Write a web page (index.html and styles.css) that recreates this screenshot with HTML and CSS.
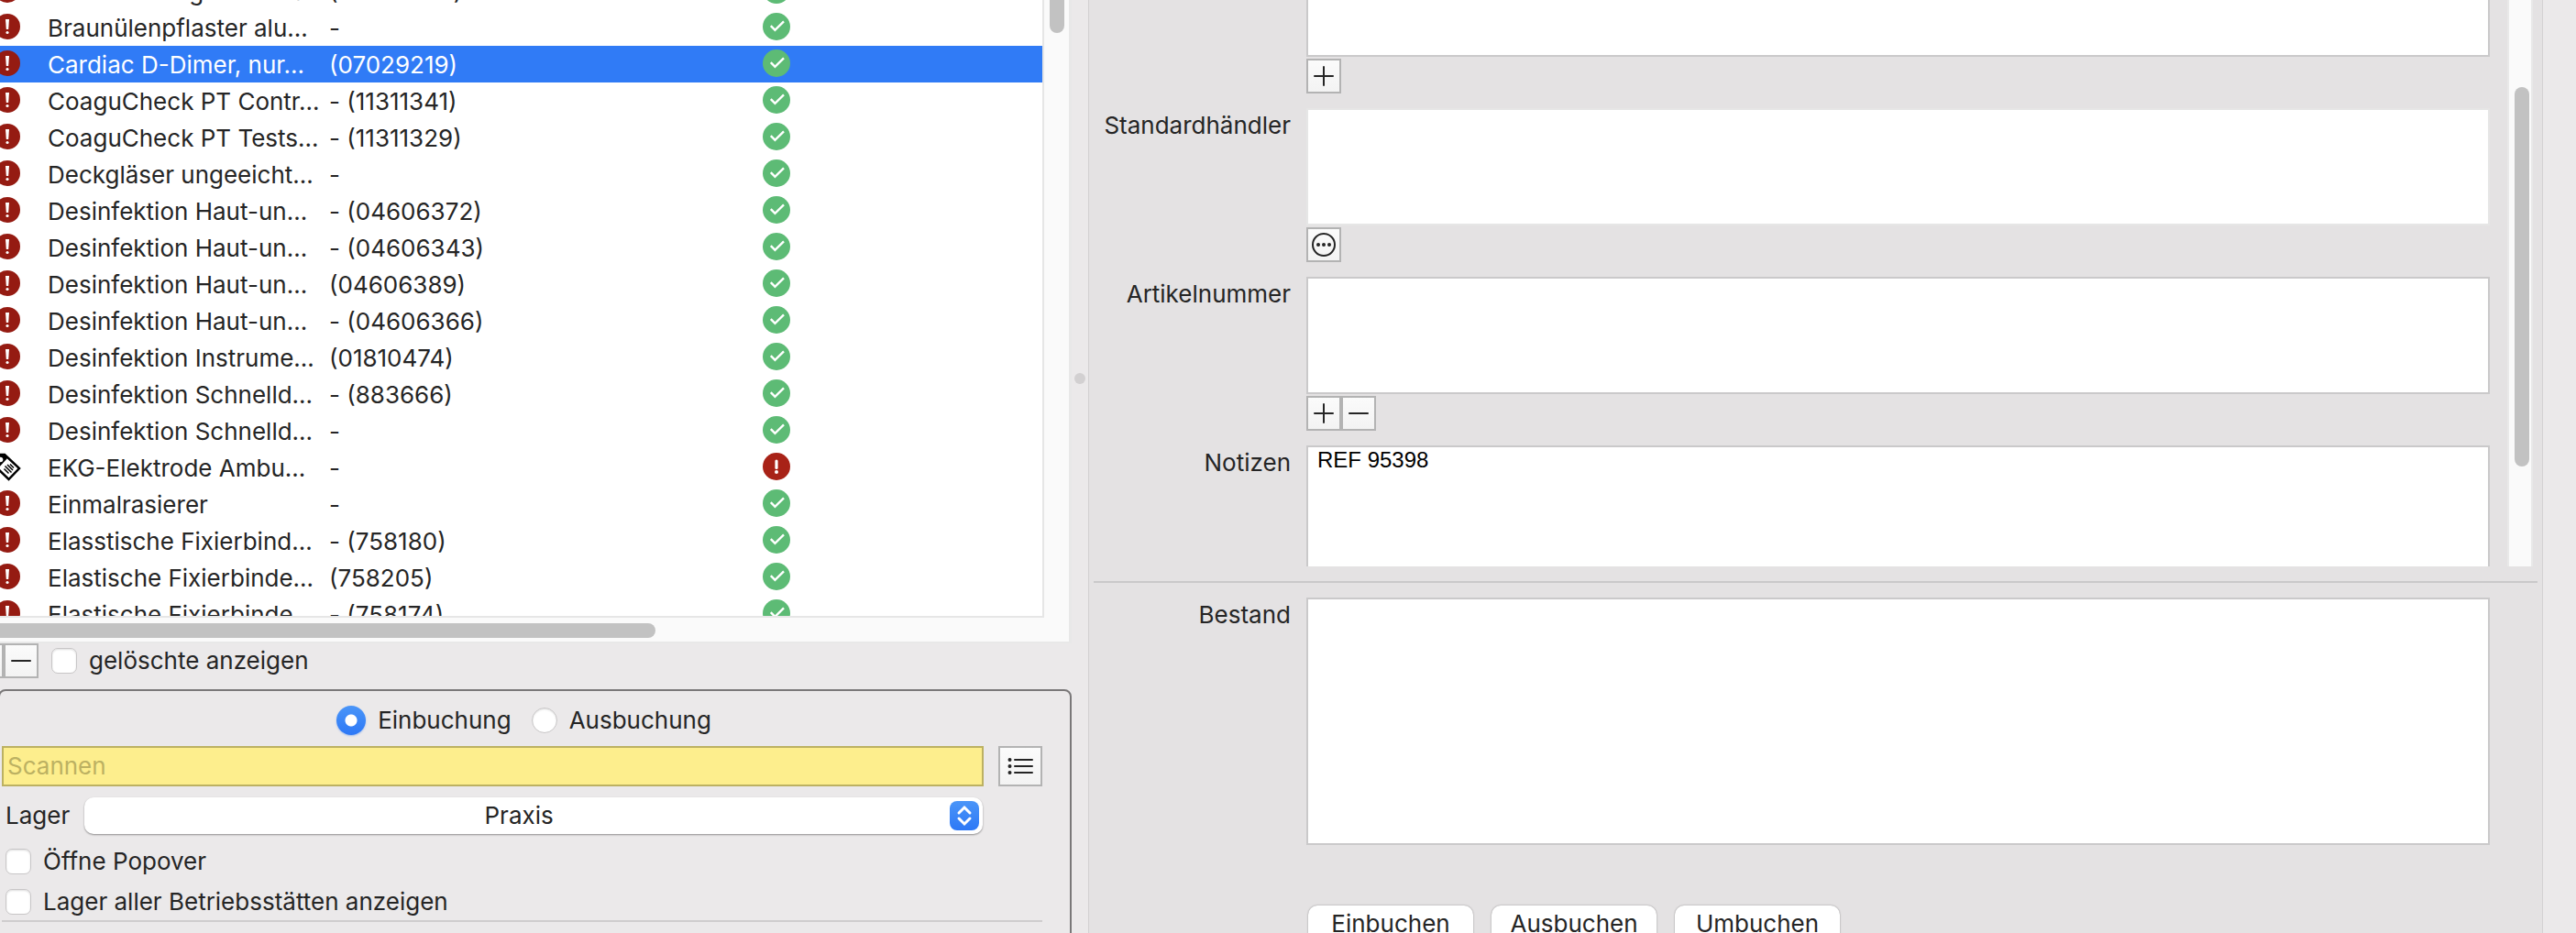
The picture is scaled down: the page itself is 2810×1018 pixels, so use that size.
FILE: index.html
```html
<!DOCTYPE html>
<html lang="de">
<head>
<meta charset="utf-8">
<title>Lagerverwaltung</title>
<link rel="stylesheet" href="styles.css">
</head>
<body>
<svg class="defs" aria-hidden="true">
  <symbol id="ok" viewBox="0 0 30 30"><circle cx="15" cy="15" r="15" fill="#5dbb75"/><path d="M8.800 14.200L13.400 18.900L23 9.400" fill="none" stroke="#fff" stroke-width="2.400"/></symbol>
  <symbol id="alert" viewBox="0 0 30 30"><circle cx="15" cy="15" r="15" fill="#a82217"/><path d="M15 9V16.500" stroke="#fff" stroke-width="3.200" stroke-linecap="round"/><circle cx="15" cy="21" r="2" fill="#fff"/></symbol>
  <symbol id="warn" viewBox="0 0 32 32"><circle class="ring" cx="16" cy="16" r="15"/><circle cx="16" cy="16" r="14" fill="#951b12"/><path d="M14 8h4l-.8 11h-2.400z" fill="#fff"/><circle cx="16" cy="22.500" r="1.600" fill="#fff"/></symbol>
  <symbol id="tag" viewBox="0 0 32 32"><path d="M1 3H13L29 18L17.500 30L1 14Z" fill="#fff" stroke="#000" stroke-width="2.500"/><path d="M1 2H13L17 6L6 18L1 13Z"/><circle cx="8.500" cy="8.500" r="2.800" fill="#fff"/><path d="M12.500 18.500l5 5M13.500 15.500l7 7M16 14l6 6M19 13.500l4 4" stroke="#000" stroke-width="1.500"/></symbol>
</svg>
<div class="window">
  <main class="left">
    <div class="list">
      <div class="rows">
        <table class="items">
          <colgroup><col class="c-state"><col class="c-name"><col class="c-code"><col class="c-stock"></colgroup>
          <tbody>
            <tr><td><svg class="state"><use href="#warn"/></svg></td><td>Blutentn. Magendorn S...</td><td>(06575595)</td><td><svg class="stock"><use href="#ok"/></svg></td></tr>
            <tr><td><svg class="state"><use href="#warn"/></svg></td><td>Braunülenpflaster alu...</td><td>-</td><td><svg class="stock"><use href="#ok"/></svg></td></tr>
            <tr class="selected"><td><svg class="state"><use href="#warn"/></svg></td><td>Cardiac D-Dimer, nur...</td><td>(07029219)</td><td><svg class="stock"><use href="#ok"/></svg></td></tr>
            <tr><td><svg class="state"><use href="#warn"/></svg></td><td>CoaguCheck PT Contr...</td><td>- (11311341)</td><td><svg class="stock"><use href="#ok"/></svg></td></tr>
            <tr><td><svg class="state"><use href="#warn"/></svg></td><td>CoaguCheck PT Tests...</td><td>- (11311329)</td><td><svg class="stock"><use href="#ok"/></svg></td></tr>
            <tr><td><svg class="state"><use href="#warn"/></svg></td><td>Deckgläser ungeeicht...</td><td>-</td><td><svg class="stock"><use href="#ok"/></svg></td></tr>
            <tr><td><svg class="state"><use href="#warn"/></svg></td><td>Desinfektion Haut-un...</td><td>- (04606372)</td><td><svg class="stock"><use href="#ok"/></svg></td></tr>
            <tr><td><svg class="state"><use href="#warn"/></svg></td><td>Desinfektion Haut-un...</td><td>- (04606343)</td><td><svg class="stock"><use href="#ok"/></svg></td></tr>
            <tr><td><svg class="state"><use href="#warn"/></svg></td><td>Desinfektion Haut-un...</td><td>(04606389)</td><td><svg class="stock"><use href="#ok"/></svg></td></tr>
            <tr><td><svg class="state"><use href="#warn"/></svg></td><td>Desinfektion Haut-un...</td><td>- (04606366)</td><td><svg class="stock"><use href="#ok"/></svg></td></tr>
            <tr><td><svg class="state"><use href="#warn"/></svg></td><td>Desinfektion Instrume...</td><td>(01810474)</td><td><svg class="stock"><use href="#ok"/></svg></td></tr>
            <tr><td><svg class="state"><use href="#warn"/></svg></td><td>Desinfektion Schnelld...</td><td>- (883666)</td><td><svg class="stock"><use href="#ok"/></svg></td></tr>
            <tr><td><svg class="state"><use href="#warn"/></svg></td><td>Desinfektion Schnelld...</td><td>-</td><td><svg class="stock"><use href="#ok"/></svg></td></tr>
            <tr><td><svg class="state"><use href="#tag"/></svg></td><td>EKG-Elektrode Ambu...</td><td>-</td><td><svg class="stock"><use href="#alert"/></svg></td></tr>
            <tr><td><svg class="state"><use href="#warn"/></svg></td><td>Einmalrasierer</td><td>-</td><td><svg class="stock"><use href="#ok"/></svg></td></tr>
            <tr><td><svg class="state"><use href="#warn"/></svg></td><td>Elasstische Fixierbind...</td><td>- (758180)</td><td><svg class="stock"><use href="#ok"/></svg></td></tr>
            <tr><td><svg class="state"><use href="#warn"/></svg></td><td>Elastische Fixierbinde...</td><td>(758205)</td><td><svg class="stock"><use href="#ok"/></svg></td></tr>
            <tr><td><svg class="state"><use href="#warn"/></svg></td><td>Elastische Fixierbinde...</td><td>- (758174)</td><td><svg class="stock"><use href="#ok"/></svg></td></tr>
          </tbody>
        </table>
      </div>
      <div class="vtrack"><div class="thumb"></div></div>
      <div class="htrack"><div class="thumb"></div></div>
    </div>
    <div class="list-tools">
      <div class="joined">
        <button class="square" aria-label="Hinzufügen"><svg viewBox="0 0 34 34"><path d="M7 17H27M17 7V27"/></svg></button><button class="square" aria-label="Entfernen"><svg viewBox="0 0 34 34"><path d="M7 17H27"/></svg></button>
      </div>
      <label class="check"><input type="checkbox">gelöschte anzeigen</label>
    </div>
    <section class="booking">
      <div class="modes">
        <label class="check"><input type="radio" name="mode" checked>Einbuchung</label>
        <label class="check"><input type="radio" name="mode">Ausbuchung</label>
      </div>
      <div class="scan">
        <input class="scan-input" type="text" placeholder="Scannen" aria-label="Scannen">
        <button class="square wide" aria-label="Liste"><svg viewBox="0 0 34 34"><path d="M11 10H30M11 17H30M11 24H30"/><path class="dots" d="M5.500 10h.01M5.500 17h.01M5.500 24h.01"/></svg></button>
      </div>
      <div class="store">
        <label for="lager">Lager</label>
        <div class="popup">
          <select id="lager"><option>Praxis</option></select>
          <span class="stepper"><svg viewBox="0 0 32 32"><path d="M10 13L16 7L22 13M10 19L16 25L22 19"/></svg></span>
        </div>
      </div>
      <label class="check"><input type="checkbox">Öffne Popover</label>
      <label class="check"><input type="checkbox">Lager aller Betriebsstätten anzeigen</label>
      <hr>
    </section>
  </main>
  <div class="splitter"><span></span></div>
  <section class="right">
    <div class="scroll-area">
      <div class="form">
        <div class="field first"><span></span><div>
          <div class="box"></div>
          <div class="joined"><button class="square" aria-label="Hinzufügen"><svg viewBox="0 0 34 34"><path d="M7 17H27M17 7V27"/></svg></button></div>
        </div></div>
        <div class="field"><label for="haendler">Standardhändler</label><div>
          <textarea id="haendler" class="box plain"></textarea>
          <div class="joined"><button class="square" aria-label="Mehr"><svg viewBox="0 0 34 34"><circle cx="17" cy="17" r="12"/><path class="dots" d="M11 17h.01M17 17h.01M23 17h.01"/></svg></button></div>
        </div></div>
        <div class="field"><label for="artikel">Artikelnummer</label><div>
          <textarea id="artikel" class="box"></textarea>
          <div class="joined"><button class="square" aria-label="Hinzufügen"><svg viewBox="0 0 34 34"><path d="M7 17H27M17 7V27"/></svg></button><button class="square" aria-label="Entfernen"><svg viewBox="0 0 34 34"><path d="M7 17H27"/></svg></button></div>
        </div></div>
        <div class="field"><label for="notizen">Notizen</label><div>
          <textarea id="notizen" class="box notes">REF 95398</textarea>
        </div></div>
      </div>
      <div class="vtrack"><div class="thumb"></div></div>
    </div>
    <hr>
    <div class="field stock-field"><label for="bestand">Bestand</label><div>
      <textarea id="bestand" class="box tall"></textarea>
      <div class="actions"><button>Einbuchen</button><button>Ausbuchen</button><button>Umbuchen</button></div>
    </div></div>
  </section>
  <aside class="edge"></aside>
</div>
</body>
</html>
```
FILE: styles.css
```css
* { box-sizing: border-box; }
body {
  margin: 0;
  overflow: hidden;
  background: #ebe9ea;
  color: #252525;
  font: 26px/32px Inter, "Liberation Sans", sans-serif;
}
button, input, select, textarea { font: inherit; color: inherit; margin: 0; }
.defs { position: absolute; width: 0; height: 0; }
.window {
  display: grid;
  grid-template-columns: minmax(0, 1169fr) 19px minmax(0, 1586fr) 36px;
  height: 100vh;
  overflow: hidden;
}

/* Article list */
.left { overflow: hidden; }
.list {
  display: grid;
  grid-template-columns: 1fr 30px;
  grid-template-rows: 674px 28px;
}
.rows {
  display: flex;
  align-items: flex-end;
  overflow: hidden;
  background: #fff;
  border: solid #e6e6e6;
  border-width: 0 2px 2px 0;
}
.items {
  width: 100%;
  margin-bottom: -18px;
  table-layout: fixed;
  border-collapse: collapse;
}
.items td { height: 40px; padding: 2px 0 0; white-space: nowrap; vertical-align: middle; }
.c-state { width: 52px; }
.c-name { width: 307px; }
.c-code { width: 473px; }
.items svg { display: block; }
.state { width: 32px; height: 32px; margin-left: -8px; margin-top: -4px; }
.stock { width: 30px; height: 30px; margin-top: -4px; }
.ring { fill: none; }
.selected { background: #307bf6; color: #fff; }
.selected .ring { fill: #fff; }
.selected .state { fill: #fff; }
.vtrack { background: #fafafa; border-right: 3px solid #e8e8e8; }
.list .vtrack { padding-left: 6px; }
.vtrack .thumb { width: 16px; height: 36px; background: #c2c2c2; border-radius: 0 0 8px 8px; }
.htrack {
  grid-column: 1 / -1;
  padding-top: 6px;
  background: #fafafa;
  border: solid #e8e8e8;
  border-width: 0 3px 2px 0;
}
.htrack .thumb { width: 715px; height: 16px; background: #c2c2c2; border-radius: 0 8px 8px 0; }

/* Square icon buttons */
.joined { display: flex; }
.square {
  width: 38px;
  height: 38px;
  padding: 0;
  border: 2px solid #b3b3b3;
  background: linear-gradient(#fbfbfb, #f3f3f3);
}
.square svg {
  display: block;
  width: 34px;
  height: 34px;
  margin: auto;
  fill: none;
  stroke: #252525;
  stroke-width: 2;
  stroke-linecap: round;
}
.square .dots { stroke-width: 4; }
.square.wide { width: 48px; height: 44px; }
.list-tools { display: flex; gap: 14px; height: 50px; margin-left: -34px; }

/* Tick boxes and radios */
.check { display: flex; align-items: center; gap: 13px; height: 44px; }
.check input {
  appearance: none;
  width: 28px;
  height: 28px;
  background: #fff;
  border: 1px solid #c8c6c7;
  border-radius: 7px;
  box-shadow: inset 0 1px 2px #0002;
}
.list-tools .check { height: 38px; }
.check input[type="radio"] { border-radius: 50%; }
.check input:checked {
  width: 32px;
  height: 32px;
  border: 0;
  box-shadow: 0 1px 2px #307bf666;
  background: radial-gradient(circle, #fff 6px, transparent 7px), linear-gradient(#4a95f8, #2d78f6);
}

/* Booking box */
.booking {
  height: 400px;
  margin-left: -2px;
  padding: 10px 30px 0 6px;
  border: 2px solid #7a7879;
  border-radius: 8px;
}
.modes { display: flex; justify-content: center; gap: 22px; }
.scan { display: flex; gap: 16px; margin: 6px 0 12px -4px; }
.scan-input {
  flex: 1;
  min-width: 0;
  height: 44px;
  padding: 0 4px 2px;
  border: 2px solid #bcb162;
  background: #fdee8d;
}
.scan-input::placeholder { color: #bcb162; opacity: 1; }
.store { display: flex; align-items: center; gap: 16px; padding: 0 65px 8px 0; }
.popup { position: relative; flex: 1; display: flex; }
.popup select {
  appearance: none;
  width: 100%;
  height: 40px;
  padding: 0 32px 0 0;
  border: 0;
  border-radius: 10px;
  background: #fff;
  box-shadow: 0 1px 2px #0006;
  text-align: center;
  text-align-last: center;
}
.stepper {
  position: absolute;
  right: 4px;
  top: 4px;
  width: 32px;
  height: 32px;
  border-radius: 8px;
  background: linear-gradient(#4a95f8, #2d78f6);
  pointer-events: none;
}
.stepper svg { display: block; fill: none; stroke: #fff; stroke-width: 3; stroke-linecap: round; }
hr { height: 2px; margin: 0; border: 0; background: #cfcdce; }
.booking hr { margin: -2px 0 0 -4px; }

.splitter { display: flex; align-items: center; justify-content: center; border-right: 1px solid #d3d1d2; padding-bottom: 192px; }
.splitter span { width: 12px; height: 12px; border-radius: 50%; background: #d2d0d1; }

/* Detail form */
.right { background: #e4e2e3; border-right: 1px solid #d3d1d2; overflow: hidden; }
.scroll-area { display: flex; justify-content: space-between; height: 618px; padding-right: 10px; overflow: hidden; }
.form { flex: 1; display: flex; flex-direction: column; gap: 16px; }
.field {
  display: grid;
  grid-template-columns: 220px 1fr;
  gap: 17px;
  padding-right: 19px;
}
.field label { padding-top: 3px; text-align: right; }
.box {
  display: block;
  width: 100%;
  height: 128px;
  margin-bottom: 2px;
  padding: 0 10px;
  border: 2px solid #cac9ca;
  background: #fff;
  resize: none;
  outline: 0;
}
.box.plain { border-color: #e6e6e6; }
.first .box { height: 62px; border-top: 0; }
.box.notes { height: 160px; color: #000; font: 24px/28px "Liberation Sans", sans-serif; }
.box.tall { height: 270px; }
.scroll-area .vtrack { width: 28px; padding: 95px 0 0 6px; border: solid #e9e9e9; border-width: 0 2px; }
.scroll-area .thumb { height: 414px; border-radius: 8px; }
.right hr { margin: 16px 5px; background: #cac9ca; }
.stock-field { padding-right: 57px; }
.actions { display: flex; gap: 20px; margin: 66px 0 0 2px; }
.actions button {
  width: 180px;
  height: 40px;
  border: 0;
  border-radius: 10px;
  background: #fff;
  box-shadow: 0 0 2px #0006;
}
.edge { background: #ebe9ea; }
```
